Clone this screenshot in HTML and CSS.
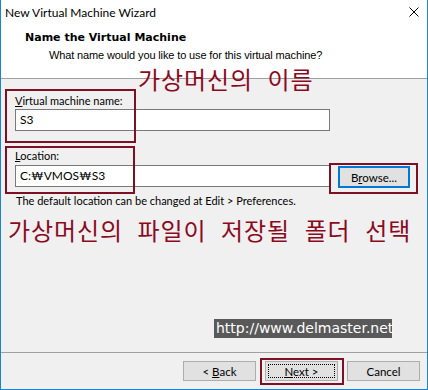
FILE: index.html
```html
<!DOCTYPE html>
<html lang="ko">
<head>
  <meta charset="UTF-8">
  <title>New Virtual Machine Wizard</title>
  <link rel="stylesheet" href="styles.css">
</head>
<body>
  <div class="window">
    <div class="titlebar">
      <span class="title">New Virtual Machine Wizard</span>
      <svg class="close" width="10" height="10" viewBox="0 0 10 10">
        <path d="M0.5 0.5 L9.5 9.5 M9.5 0.5 L0.5 9.5" stroke="#000" stroke-width="1"/>
      </svg>
    </div>

    <div class="header">
      <div class="heading">Name the Virtual Machine</div>
      <div class="subheading">What name would you like to use for this virtual machine?</div>
    </div>

    <div class="content">
      <label class="label"><u>V</u>irtual machine name:</label>
      <div class="row">
        <div class="field">S3</div>
      </div>

      <label class="label"><u>L</u>ocation:</label>
      <div class="row last">
        <div class="field">C:₩VMOS₩S3</div>
        <button class="btn browse">B<u>r</u>owse...</button>
      </div>
      <p class="hint">The default location can be changed at Edit &gt; Preferences.</p>

      <p class="note big">가상머신의 파일이 저장될 폴더 선택</p>
    </div>

    <div class="footer">
      <button class="btn">&lt; <u>B</u>ack</button>
      <button class="btn next"><span class="focus"><u>N</u>ext &gt;</span></button>
      <button class="btn">Cancel</button>
    </div>

    <!-- annotations drawn over the dialog -->
    <p class="note title-note">가상머신의 이름</p>
    <div class="mark mark-name"></div>
    <div class="mark mark-location"></div>
    <div class="mark mark-browse"></div>
    <div class="mark mark-next"></div>
    <div class="watermark">http://www.delmaster.net</div>
  </div>
</body>
</html>
```

FILE: styles.css
```css
* {
  box-sizing: border-box;
}

body {
  margin: 0;
  font-family: Lato, "Noto Sans", sans-serif;
  font-size: 11px;
  color: #000;
}

.window {
  position: relative;
  width: 428px;
  height: 390px;
  background: #f0f0f0;
  border: 1px solid #1883d7;
  border-top: none;
  display: flex;
  flex-direction: column;
  overflow: hidden;
}

.titlebar {
  height: 26px;
  background: #fff;
  display: flex;
  align-items: center;
  justify-content: space-between;
  padding: 0 8px 1px 4px;
}

.title {
  font-size: 12px;
  color: #000;
}

.close {
  display: block;
  margin-top: -1px;
}

.header {
  height: 53px;
  background: #fff;
  border-bottom: 1px solid #a0a0a0;
  padding: 5px 0 0 24px;
}

.heading {
  font-family: "DejaVu Sans", sans-serif;
  font-weight: bold;
  font-size: 11px;
  line-height: 14px;
}

.subheading {
  font-family: "Liberation Sans", sans-serif;
  font-size: 11px;
  letter-spacing: -0.13px;
  line-height: 14px;
  margin: 3px 0 0 24px;
}

.content {
  flex: 1;
  padding: 14px 0 0 14px;
}

.label {
  display: block;
  line-height: 16px;
}

.row {
  display: flex;
  align-items: center;
  gap: 8px;
  margin-bottom: 17px;
}

.row.last {
  margin-bottom: 5px;
}

.field {
  width: 315px;
  height: 22px;
  background: #fff;
  border: 1px solid #7a7a7a;
  padding: 0 4px;
  font-size: 12px;
  line-height: 20px;
}

.btn {
  font-family: Lato, "Noto Sans", sans-serif;
  font-size: 11.5px;
  color: #000;
  width: 73px;
  height: 20px;
  background: #e1e1e1;
  border: 1px solid #adadad;
  padding: 0;
  line-height: 17px;
}

.browse {
  width: 72px;
  height: 22px;
  border: 2px solid #0078d7;
  margin-top: 2px;
}

.hint {
  margin: 0;
  line-height: 16px;
  padding-left: 1px;
}

.note {
  margin: 0;
  font-family: "Noto Sans CJK KR", sans-serif;
  color: #8b0a1e;
  font-size: 24px;
  line-height: 28px;
  letter-spacing: 0.9px;
  word-spacing: 7px;
}

.big {
  margin: 7px 0 0 -7px;
}

.footer {
  height: 37px;
  border-top: 1px solid #a0a0a0;
  display: flex;
  justify-content: flex-end;
  gap: 9px;
  padding: 8px 7px 0 0;
}

.next {
  padding: 2px;
}

.focus {
  display: block;
  height: 100%;
  border: 1px dotted #000;
  line-height: 13px;
}

.title-note {
  position: absolute;
  left: 137px;
  top: 65px;
}

.mark {
  position: absolute;
  border: 2px solid #7d1022;
}

.mark-name {
  left: 4px;
  top: 89px;
  width: 131px;
  height: 54px;
}

.mark-location {
  left: 4px;
  top: 146px;
  width: 130px;
  height: 48px;
}

.mark-browse {
  left: 328px;
  top: 163px;
  width: 89px;
  height: 31px;
}

.mark-next {
  left: 259px;
  top: 358px;
  width: 84px;
  height: 27px;
}

.watermark {
  position: absolute;
  left: 213px;
  top: 319px;
  width: 178px;
  height: 19px;
  background: #595959;
  color: #fff;
  font-family: "DejaVu Sans", sans-serif;
  font-size: 14px;
  line-height: 19px;
  padding-left: 2px;
  white-space: nowrap;
}
```
